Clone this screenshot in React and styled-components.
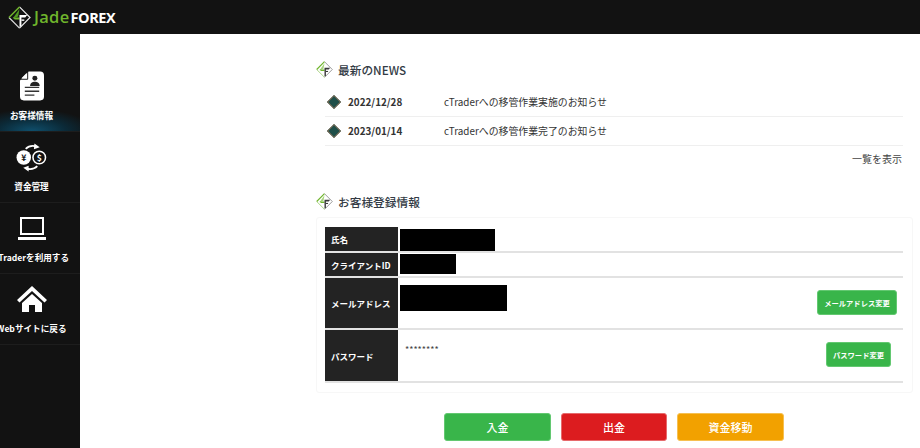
import React from 'react';
import styled, { createGlobalStyle } from 'styled-components';

const GlobalStyle = createGlobalStyle`
  html, body {
    margin: 0;
    padding: 0;
    height: 100%;
    overflow: hidden;
    background: #fff;
    font-family: 'Noto Sans CJK JP', 'Noto Sans', sans-serif;
  }
`;

const Page = styled.div`
  width: 920px;
  height: 448px;
  display: flex;
  flex-direction: column;
  overflow: hidden;
`;

const TopBar = styled.header`
  height: 34px;
  flex: none;
  background: #121212;
  display: flex;
  align-items: center;
  padding-left: 8px;
  gap: 3px;
`;

const LogoText = styled.div`
  font-family: 'Open Sans', 'Liberation Sans', sans-serif;
  font-size: 16.5px;
  font-weight: 600;
  color: #6fb52c;
  letter-spacing: 0.3px;
  line-height: 1;
  span {
    color: #fff;
    font-size: 14.5px;
    font-weight: 700;
    letter-spacing: -0.4px;
    margin-left: 1px;
  }
`;

const Body = styled.div`
  flex: 1;
  display: flex;
  min-height: 0;
`;

const Sidebar = styled.nav`
  width: 80px;
  flex: none;
  background: #121212;
  padding-top: 27px;
  overflow: hidden;
`;

const NavItem = styled.a`
  height: 71px;
  box-sizing: border-box;
  display: flex;
  flex-direction: column;
  align-items: center;
  justify-content: flex-end;
  padding: 0 17px 10px 0;
  border-bottom: 1px solid #1d1d1d;
  color: #fff;
  font-size: 8.6px;
  font-weight: 700;
  white-space: nowrap;
  background: ${(p) =>
    p.$active
      ? 'radial-gradient(ellipse 62px 22px at 40% 100%, #0f4f6c 0%, #0b2a38 55%, #121212 100%)'
      : 'transparent'};
`;

const NavIcon = styled.div`
  height: 36px;
  display: flex;
  align-items: center;
  justify-content: center;
  margin-bottom: 5px;
`;

const Main = styled.main`
  flex: 1;
  background: #fff;
  padding: 25px 7px 0 236px;
  min-width: 0;
`;

const SectionTitle = styled.h2`
  margin: 0;
  display: flex;
  align-items: center;
  gap: 5px;
  font-size: 11.7px;
  font-weight: 500;
  color: #333b45;
  height: 20px;
`;

const NewsList = styled.ul`
  list-style: none;
  margin: 9px 10px 0 9px;
  padding: 0;
`;

const NewsRow = styled.li`
  height: 29px;
  box-sizing: border-box;
  display: flex;
  align-items: center;
  border-bottom: 1px solid #efefef;
  font-size: 9.9px;
  color: #333;
`;

const Diamond = styled.span`
  width: 10px;
  height: 10px;
  margin-left: 4px;
  background: #1f4f49;
  border: 1px solid #7a6a55;
  box-sizing: border-box;
  transform: rotate(45deg);
  flex: none;
`;

const NewsDate = styled.span`
  width: 96px;
  margin-left: 9px;
  font-weight: 700;
  flex: none;
`;

const MoreLink = styled.div`
  text-align: right;
  margin: 5px 11px 0 0;
  font-size: 10px;
  line-height: 15px;
  color: #444;
`;

const RegisterSection = styled.section`
  margin-top: 25px;
`;

const Card = styled.div`
  margin-top: 6px;
  padding: 9px 9px 9px 8px;
  border: 1px solid #f7f7f7;
  border-radius: 3px;
`;

const InfoTable = styled.div`
  display: flex;
  flex-direction: column;
`;

const InfoRow = styled.div`
  display: flex;
  height: ${(p) => p.$height}px;
  box-sizing: border-box;
  border-bottom: 2px solid #e2e2e2;
`;

const InfoLabel = styled.div`
  width: 73px;
  flex: none;
  background: #232323;
  color: #fff;
  font-size: 8.5px;
  font-weight: 700;
  padding-left: 6px;
  box-sizing: border-box;
  display: flex;
  align-items: center;
  white-space: nowrap;
`;

const InfoValue = styled.div`
  flex: 1;
  display: flex;
  align-items: flex-start;
  justify-content: space-between;
  padding: ${(p) => p.$top}px ${(p) => p.$right}px 0 2px;
`;

const Redacted = styled.div`
  width: ${(p) => p.$width}px;
  height: ${(p) => p.$height}px;
  background: #000;
`;

const Stars = styled.span`
  margin: 9px 0 0 5px;
  font-size: 9px;
  line-height: 11px;
  color: #444;
`;

const SmallButton = styled.button`
  font-family: inherit;
  height: 25px;
  width: ${(p) => p.$width}px;
  margin-top: ${(p) => p.$top}px;
  padding: 0;
  background: #39b54a;
  border: 1px solid #63c871;
  border-radius: 3px;
  color: #fff;
  font-size: 7.3px;
  font-weight: 700;
  white-space: nowrap;
`;

const ActionRow = styled.div`
  display: flex;
  justify-content: center;
  gap: 10px;
  margin-top: 20px;
  padding-right: 1px;
`;

const ActionButton = styled.button`
  font-family: inherit;
  width: ${(p) => p.$width}px;
  height: 28px;
  padding: 0;
  border-radius: 3px;
  border: 1px solid ${(p) => p.$edge};
  background: ${(p) => p.$color};
  color: #fff;
  font-size: 11px;
  font-weight: 500;
`;

function LogoMark({ size, dark }) {
  const edge = dark ? '#8a8a8a' : '#f0f0f0';
  const cross = dark ? '#3a3a3a' : '#fff';
  return (
    <svg width={size} height={size} viewBox="0 0 24 24" fill="none">
      <path d="M12 1 L23 12 L12 23" stroke={edge} strokeWidth="1.2" />
      <path d="M1 12 L12 23" stroke={dark ? '#9ccc70' : '#e0e0e0'} strokeWidth="1.2" />
      <path d="M12 1 L1 12" stroke="#6fb52c" strokeWidth="1.6" />
      <path d="M12 3 L10.5 11 L5 13 Z" fill={dark ? '#a6d47a' : '#4f9a1f'} />
      <path d="M5 12 H12 V14 H7 Z" fill="#6fb52c" />
      <path d="M12 9.5 H20 L18 12 H14 V21 L12 22 Z" fill={cross} />
      <path d="M14 14 H17 V15.5 H14 Z" fill={cross} />
    </svg>
  );
}

function ClientIcon() {
  return (
    <svg width="24" height="30" viewBox="0 0 25 30">
      <path d="M9 0 H21 a4 4 0 0 1 4 4 V26 a4 4 0 0 1 -4 4 H4 a4 4 0 0 1 -4 -4 V9 Z" fill="#fff" />
      <path d="M7 1.5 V7 H1.5 Z" fill="#fff" />
      <path d="M8 0 V8 H0" stroke="#121212" strokeWidth="1" fill="none" />
      <circle cx="15.5" cy="7" r="2.6" fill="#222" />
      <path d="M10.5 15 c0 -3.5 2.5 -4.5 5 -4.5 s5 1 5 4.5 Z" fill="#222" />
      <path d="M5 16.5 H20 M5 20.5 H20 M5 24.5 H15" stroke="#333" strokeWidth="1.4" />
    </svg>
  );
}

function MoneyIcon() {
  return (
    <svg width="31" height="29" viewBox="0 0 32 30">
      <circle cx="8" cy="15" r="7.5" fill="#fff" />
      <text x="8" y="18.5" textAnchor="middle" fontSize="9" fontWeight="700" fill="#121212">¥</text>
      <circle cx="24" cy="15" r="6.5" fill="#121212" stroke="#fff" strokeWidth="1.6" />
      <text x="24" y="18.5" textAnchor="middle" fontSize="9" fontWeight="700" fill="#fff">$</text>
      <path d="M10 6 C13 3 17 2.5 21 3.5" stroke="#fff" strokeWidth="1.8" fill="none" />
      <path d="M19 0.5 L24.5 4.5 L18.5 6.5 Z" fill="#fff" />
      <path d="M22 24 C19 27 15 27.5 11 26.5" stroke="#fff" strokeWidth="1.8" fill="none" />
      <path d="M13 23.5 L7.5 25.5 L13 29.5 Z" fill="#fff" />
    </svg>
  );
}

function LaptopIcon() {
  return (
    <svg width="28" height="23" viewBox="0 0 28 23" fill="none">
      <rect x="3" y="1" width="22" height="16" stroke="#fff" strokeWidth="2" />
      <rect x="0" y="20" width="28" height="3" fill="#fff" />
    </svg>
  );
}

function HomeIcon() {
  return (
    <svg width="30" height="26" viewBox="0 0 30 26">
      <path d="M15 0 L30 14 L27.5 16.5 L15 5 L2.5 16.5 L0 14 Z" fill="#fff" />
      <path d="M15 8 L25 17 V26 H18 V19 H12 V26 H5 V17 Z" fill="#fff" />
    </svg>
  );
}

const navItems = [
  { label: 'お客様情報', icon: <ClientIcon />, active: true },
  { label: '資金管理', icon: <MoneyIcon /> },
  { label: 'cTraderを利用する', icon: <LaptopIcon /> },
  { label: 'Webサイトに戻る', icon: <HomeIcon /> },
];

const news = [
  { date: '2022/12/28', title: 'cTraderへの移管作業実施のお知らせ' },
  { date: '2023/01/14', title: 'cTraderへの移管作業完了のお知らせ' },
];

export default function App() {
  return (
    <Page>
      <GlobalStyle />
      <TopBar>
        <LogoMark size={23} />
        <LogoText>
          Jade<span>FOREX</span>
        </LogoText>
      </TopBar>
      <Body>
        <Sidebar>
          {navItems.map((item) => (
            <NavItem key={item.label} $active={item.active}>
              <NavIcon>{item.icon}</NavIcon>
              {item.label}
            </NavItem>
          ))}
        </Sidebar>
        <Main>
          <SectionTitle>
            <LogoMark size={17} dark />
            最新のNEWS
          </SectionTitle>
          <NewsList>
            {news.map((n) => (
              <NewsRow key={n.date}>
                <Diamond />
                <NewsDate>{n.date}</NewsDate>
                {n.title}
              </NewsRow>
            ))}
          </NewsList>
          <MoreLink>一覧を表示</MoreLink>
          <RegisterSection>
            <SectionTitle>
              <LogoMark size={17} dark />
              お客様登録情報
            </SectionTitle>
            <Card>
              <InfoTable>
                <InfoRow $height={26}>
                  <InfoLabel>氏名</InfoLabel>
                  <InfoValue $top={2} $right={0}>
                    <Redacted $width={95} $height={22} />
                  </InfoValue>
                </InfoRow>
                <InfoRow $height={25}>
                  <InfoLabel>クライアントID</InfoLabel>
                  <InfoValue $top={1} $right={0}>
                    <Redacted $width={56} $height={20} />
                  </InfoValue>
                </InfoRow>
                <InfoRow $height={52}>
                  <InfoLabel>メールアドレス</InfoLabel>
                  <InfoValue $top={7} $right={6}>
                    <Redacted $width={107} $height={26} />
                    <SmallButton $width={80} $top={5}>メールアドレス変更</SmallButton>
                  </InfoValue>
                </InfoRow>
                <InfoRow $height={53}>
                  <InfoLabel>パスワード</InfoLabel>
                  <InfoValue $top={5} $right={12}>
                    <Stars>********</Stars>
                    <SmallButton $width={65} $top={7}>パスワード変更</SmallButton>
                  </InfoValue>
                </InfoRow>
              </InfoTable>
            </Card>
            <ActionRow>
              <ActionButton $width={107} $color="#39b54a" $edge="#63c871">入金</ActionButton>
              <ActionButton $width={106} $color="#dc1c1f" $edge="#e66a6c">出金</ActionButton>
              <ActionButton $width={107} $color="#f2a100" $edge="#f6c051">資金移動</ActionButton>
            </ActionRow>
          </RegisterSection>
        </Main>
      </Body>
    </Page>
  );
}
